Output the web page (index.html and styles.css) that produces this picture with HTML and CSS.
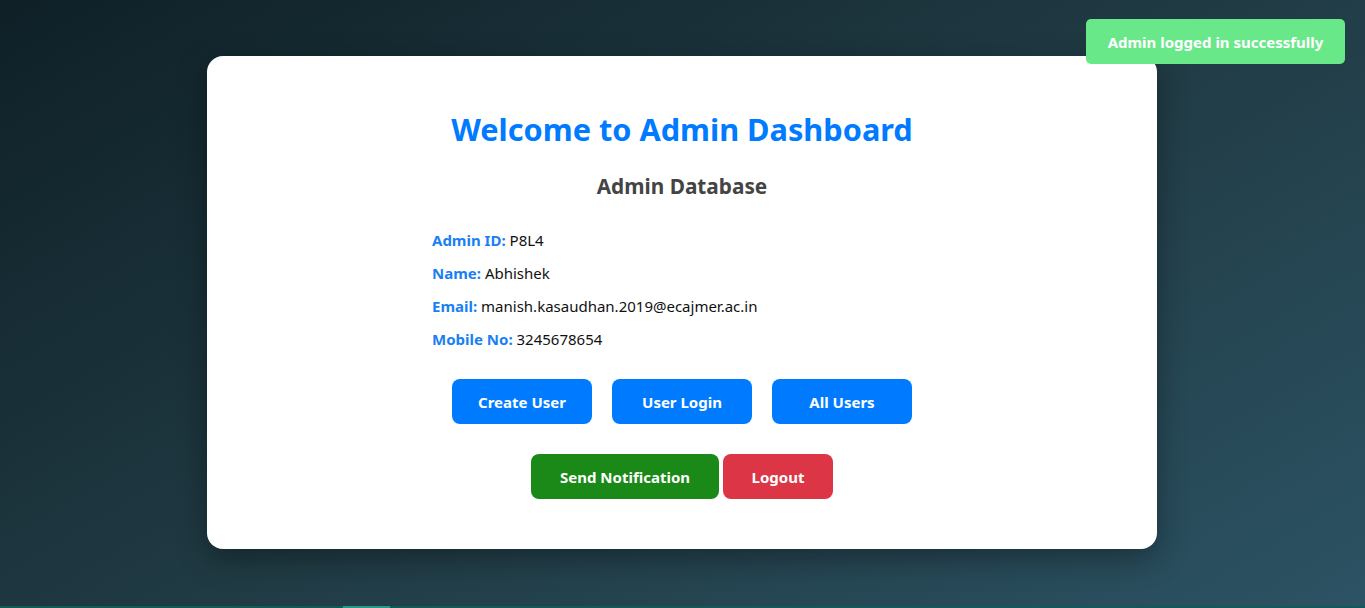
FILE: index.html
```html
<!DOCTYPE html>
<html lang="en">
<head>
<meta charset="utf-8">
<title>Admin Dashboard</title>
<link rel="stylesheet" href="styles.css">
</head>
<body>
<div class="page">
  <div class="card">
    <h1 class="title">Welcome to Admin Dashboard</h1>
    <h2 class="subtitle">Admin Database</h2>
    <div class="info">
      <p class="row"><span class="label">Admin ID:</span> P8L4</p>
      <p class="row"><span class="label">Name:</span> Abhishek</p>
      <p class="row"><span class="label">Email:</span> manish.kasaudhan.2019@ecajmer.ac.in</p>
      <p class="row"><span class="label">Mobile No:</span> 3245678654</p>
    </div>
    <div class="actions">
      <button class="btn btn-blue">Create User</button>
      <button class="btn btn-blue">User Login</button>
      <button class="btn btn-blue">All Users</button>
    </div>
    <div class="actions2">
      <button class="btn btn-green">Send Notification</button>
      <button class="btn btn-red">Logout</button>
    </div>
  </div>
  <div class="toast">Admin logged in successfully</div>
  <div class="bottom-strip"><span class="strip-mark"></span></div>
</div>
</body>
</html>
```
FILE: styles.css
```css
* { box-sizing: border-box; }
html, body { margin: 0; padding: 0; }
body {
  font-family: "Noto Sans", "Open Sans", sans-serif;
  background: linear-gradient(150deg, #0f2027 0%, #203a43 50%, #2c5364 100%);
  min-height: 100vh;
}
.page {
  position: relative;
  height: 608px;
  display: flex;
  align-items: center;
  justify-content: center;
  overflow: hidden;
}
.card {
  width: 950px;
  height: 493px;
  background: #fff;
  border-radius: 16px;
  box-shadow: 0 10px 30px rgba(0,0,0,0.35);
  padding: 51px 0 0;
  display: flex;
  flex-direction: column;
  align-items: center;
  margin-top: -3px;
  margin-left: -1px;
}
.title {
  margin: 0;
  color: #007bff;
  font-size: 30.7px;
  font-weight: 700;
  line-height: 44px;
}
.subtitle {
  margin: 21px 0 0;
  color: #444;
  font-size: 20.8px;
  font-weight: 700;
  line-height: 28px;
}
.info {
  width: 500px;
  margin-top: 29px;
  display: flex;
  flex-direction: column;
  gap: 11px;
}
.row {
  margin: 0;
  font-size: 15px;
  line-height: 22px;
  color: #111;
}
.label {
  color: #1a7ff5;
  font-weight: 700;
}
.actions {
  display: flex;
  gap: 20px;
  margin-top: 29px;
}
.actions2 {
  display: flex;
  gap: 4px;
  margin-top: 30px;
}
.btn {
  border: none;
  height: 45px;
  border-radius: 8px;
  color: #fff;
  font-family: inherit;
  font-size: 15px;
  font-weight: 700;
  padding: 0;
}
.btn-blue { background: #007bff; width: 140px; }
.btn-green { background: #1a8917; width: 188px; }
.btn-red { background: #dc3545; width: 110px; }
.toast {
  position: absolute;
  top: 19px;
  right: 20px;
  width: 259px;
  height: 45px;
  background: #69e88a;
  color: #fff;
  border-radius: 5px;
  font-size: 15px;
  font-weight: 700;
  display: flex;
  align-items: center;
  justify-content: center;
}
.bottom-strip {
  position: absolute;
  left: 0;
  right: 0;
  bottom: 0;
  height: 2px;
  background: #125a58;
}
.strip-mark {
  position: absolute;
  left: 343px;
  width: 47px;
  height: 2px;
  background: #2a9a88;
}
```
